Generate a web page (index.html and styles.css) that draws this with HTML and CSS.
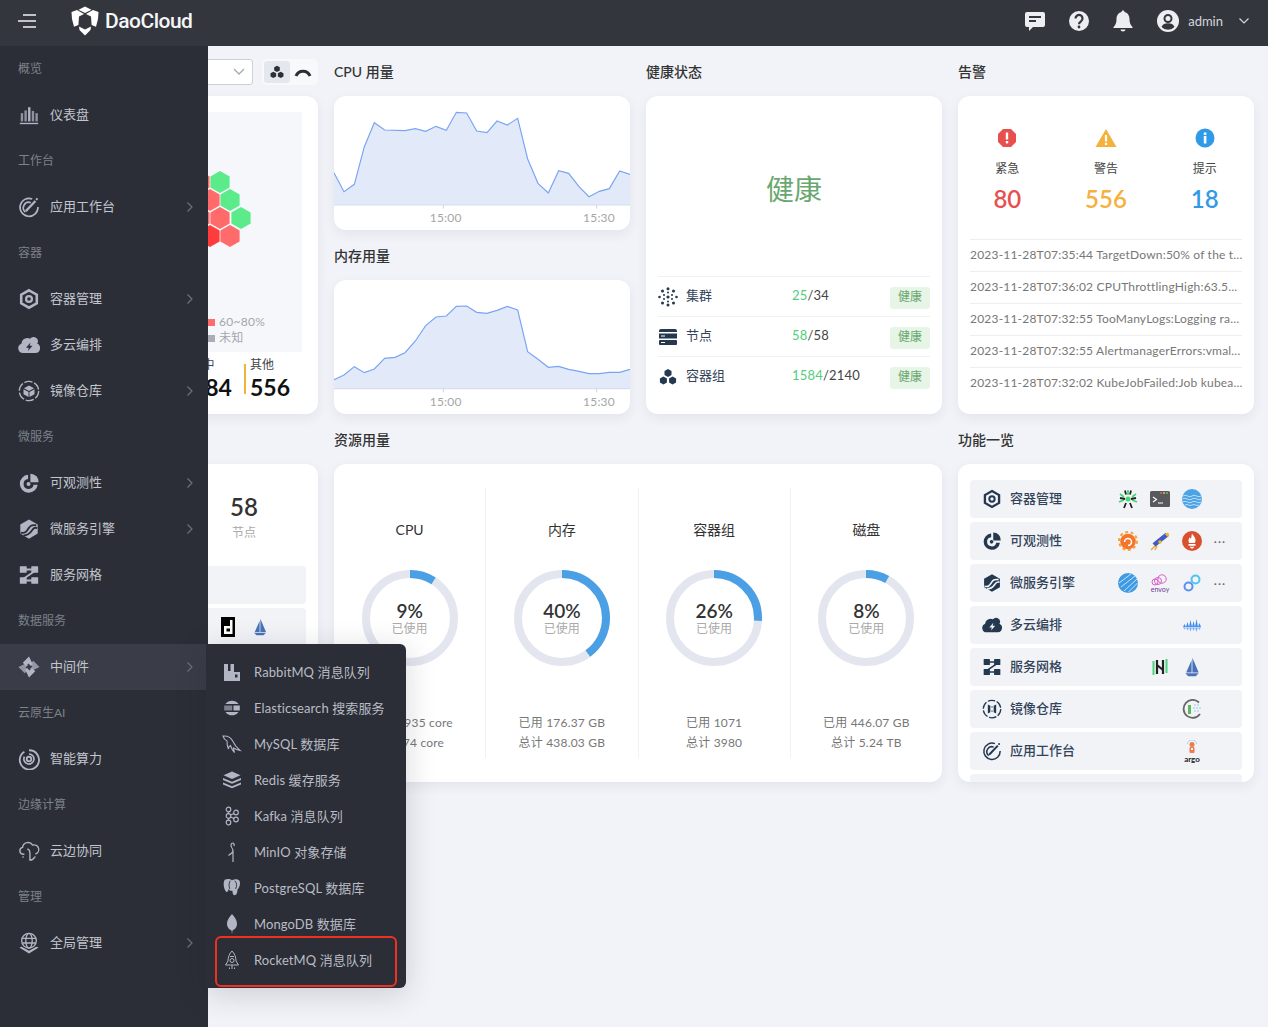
FILE: index.html
```html
<!DOCTYPE html>
<html lang="zh">
<head>
<meta charset="utf-8">
<title>DaoCloud</title>
<link rel="stylesheet" href="styles.css">
</head>
<body>
<svg class="defs" width="0" height="0" aria-hidden="true">
  <defs>
    <mask id="ms-cut"><rect width="24" height="24" fill="#fff"/><path d="M3 16c5 1 6-1 8-4s3-5 9-4M6 19c5 0 7-2 9-5s3-4 6-3" fill="none" stroke="#000" stroke-width="2"/></mask>
    <symbol id="i-bars" viewBox="0 0 24 24"><g fill="currentColor"><rect x="3" y="10" width="2.6" height="9" opacity=".75"/><rect x="7" y="7" width="2.6" height="12" opacity=".75"/><rect x="11" y="3.500" width="2.600" height="15.500"/><rect x="15" y="7.500" width="2.600" height="11.500" opacity=".75"/><rect x="19" y="10" width="2.600" height="9" opacity=".75"/><rect x="2" y="20.500" width="20" height="1.500"/></g></symbol>
    <symbol id="i-work" viewBox="0 0 24 24"><g fill="none" stroke="currentColor" stroke-width="1.800"><path d="M15.500 3.200A9.800 9.800 0 1 0 21.800 12"/><path d="M14 7.300A6 6 0 0 0 8 17.500"/><path d="M8.500 16.500 19 5.500" stroke-width="2.400"/></g><circle cx="20.500" cy="3.500" r="1.200" fill="currentColor"/></symbol>
    <symbol id="i-cont" viewBox="0 0 24 24"><path d="M12 2.500 20.500 7.300v9.400L12 21.500l-8.500-4.800V7.300z" fill="none" stroke="currentColor" stroke-width="2.800"/><circle cx="12" cy="12" r="3.200" fill="none" stroke="currentColor" stroke-width="2.400"/></symbol>
    <symbol id="i-cloud" viewBox="1 3 22 20"><path fill="currentColor" fill-rule="evenodd" d="M6 21a4.800 4.800 0 0 1-1.600-9.300A6.500 6.500 0 0 1 10.500 6a5 5 0 0 1 2.500.7A4.500 4.500 0 0 1 21 9.500a3 3 0 0 1-.8 2A5 5 0 0 1 18.500 21zM13.500 10.500 9 15.800h2.800L11 19l4.500-5.300h-2.800z"/></symbol>
    <symbol id="i-reg" viewBox="0 0 24 24"><circle cx="12" cy="12" r="10.500" fill="none" stroke="currentColor" stroke-width="1.500" stroke-dasharray="9 2"/><path d="M12 6l5.500 3L12 12 6.500 9zM6 10l5.500 3v5.500L6 15.500zM18 10l-5.500 3v5.500L18 15.500z" fill="currentColor"/></symbol>
    <symbol id="i-reg2" viewBox="0 0 24 24"><circle cx="12" cy="12" r="10.500" fill="none" stroke="currentColor" stroke-width="1.500" stroke-dasharray="9 2"/><path d="M7 6.500l3 1.500v8l-3 1.500zM17 6.500 14 8v8l3 1.500z" fill="currentColor"/><path d="M11 9.500h2M11 14.500h2" stroke="currentColor"/></symbol>
    <symbol id="i-obs" viewBox="0 0 24 24"><path fill="currentColor" d="M11 3a9.800 9.800 0 1 0 10.500 11H17a5.500 5.500 0 1 1-6-6.500z"/><path fill="currentColor" d="M13.500 1.800a9 9 0 0 1 9 9.500h-9z"/><circle cx="11.500" cy="13" r="2.200" fill="currentColor"/></symbol>
    <symbol id="i-ms" viewBox="0 0 24 24"><path d="M12 1.500 21.500 7v10L12 22.500 2.500 17V7z" fill="currentColor" mask="url(#ms-cut)"/></symbol>
    <symbol id="i-mesh" viewBox="0 0 24 24"><g fill="currentColor"><rect x="2" y="2.500" width="7.500" height="7" rx=".6"/><rect x="14.500" y="2.500" width="7.500" height="7" rx=".6"/><rect x="2" y="14.500" width="7.500" height="7" rx=".6"/><rect x="14.500" y="14.500" width="7.500" height="7" rx=".6"/></g><path d="M8 6h8M18 8 6 16M8 18h8" fill="none" stroke="currentColor" stroke-width="2"/></symbol>
    <symbol id="i-mid" viewBox="0 0 24 24"><g fill="currentColor"><path d="M12 .5 5.200 7.300 8.800 11 11.500 8.300 14 10.800 16 8.800z"/><path d="M12 .5 5.200 7.300 8.800 11 11.500 8.300 14 10.800 16 8.800z" transform="rotate(90 12 12)" opacity=".75"/><path d="M12 .5 5.200 7.300 8.800 11 11.500 8.300 14 10.800 16 8.800z" transform="rotate(180 12 12)"/><path d="M12 .5 5.200 7.300 8.800 11 11.500 8.300 14 10.800 16 8.800z" transform="rotate(270 12 12)" opacity=".75"/></g></symbol>
    <symbol id="i-ai" viewBox="0 0 24 24"><g fill="none" stroke="currentColor"><circle cx="12" cy="12" r="2.500" stroke-width="2"/><path d="M12 6.500a5.500 5.500 0 1 1-5 3" stroke-width="1.800"/><path d="M7 4a10.500 10.500 0 1 0 5-1.500" stroke-width="2"/></g></symbol>
    <symbol id="i-edge" viewBox="0 0 24 24"><g fill="none" stroke="currentColor" stroke-width="1.500"><path d="M7 15.500H5.500a3.800 3.800 0 0 1-.5-7.500 6 6 0 0 1 11-2.500 5 5 0 0 1 3 9.800"/><path d="M5 19l1-1M19 19l-1-1"/><path d="M10 10c3 0 3 3 3 5s0 5 0 7c2 0 4-1 5-3"/></g></symbol>
    <symbol id="i-global" viewBox="0 0 24 24"><g fill="none" stroke="currentColor" stroke-width="1.400"><circle cx="12" cy="9.500" r="8"/><ellipse cx="12" cy="9.500" rx="3.500" ry="8"/><path d="M4.500 7h15M4.500 12h15"/></g><path fill="currentColor" d="M1.500 17 12 23.500 22.500 17l-2.500-1-8 4.500L4 16z"/></symbol>
    <symbol id="i-hex" viewBox="-10 -11 20 22"><path d="M0-11 9.600-5.500V5.500L0 11-9.600 5.500V-5.500z" fill="currentColor"/></symbol>
    <symbol id="i-tri" viewBox="0 0 24 24"><g fill="currentColor"><path d="M12 2.500l4.200 2.400v4.800L12 12.100 7.800 9.700V4.900z"/><path d="M6.500 11.500l4.200 2.400v4.800l-4.200 2.400-4.200-2.400v-4.800z"/><path d="M17.500 11.500l4.200 2.400v4.800l-4.200 2.400-4.200-2.400v-4.800z"/></g></symbol>
    <symbol id="i-sail" viewBox="0 0 24 24"><path fill="#4a72b8" d="M12.500 1 20 18.500h-7.500zM11.500 4v14.500H5z"/><path fill="#4a72b8" d="M4 19.500h16L16.500 23h-9z"/></symbol>
  </defs>
</svg>

<header class="topbar">
  <svg class="burger" width="20" height="16" viewBox="0 0 20 16"><path d="M6 2h13M1 8h18M6 14h13" stroke="#f1f2f4" stroke-width="1.600" fill="none"/></svg>
  <svg class="logo" width="28" height="30" viewBox="0 0 28 30"><path fill="#fff" d="M14 .5l6.500 3.200L14 7 7.500 3.700zM.5 6 6 3.900l7 4-5 2.600-.6 8.500L3 20.800 1 13zM27.500 6 22 3.900l-7 4 5 2.600.6 8.500 4.400 1.800 2-7.800zM8 20.500l6 3 6-3-.5 3.500-5.500 5.500L8.500 24z"/></svg>
  <span class="brand">DaoCloud</span>
  <div class="top-actions">
    <svg width="24" height="24" viewBox="0 0 24 24"><path fill="#eceef2" d="M4 3h16a2 2 0 0 1 2 2v11a2 2 0 0 1-2 2H10l-4 4v-4H4a2 2 0 0 1-2-2V5a2 2 0 0 1 2-2z"/><path d="M6 8h12M6 12h7" stroke="#33363d" stroke-width="2"/></svg>
    <svg width="24" height="24" viewBox="0 0 24 24"><circle cx="12" cy="12" r="10" fill="#eceef2"/><path d="M8.500 9.500a3.500 3.500 0 1 1 5.500 2.800c-1.300.9-2 1.500-2 3" fill="none" stroke="#33363d" stroke-width="2.200"/><circle cx="12" cy="18" r="1.400" fill="#33363d"/></svg>
    <svg width="24" height="24" viewBox="0 0 24 24"><path fill="#eceef2" d="M12 1.500c1 0 1.500.7 1.500 1.500C17 4 18.500 7 18.500 10c0 4 1 6 3 8v1h-19v-1c2-2 3-4 3-8 0-3 1.500-6 5-7 0-.8.5-1.500 1.500-1.500zM9.500 20.500h5a2.500 2 0 0 1-5 0z"/></svg>
    <div class="user">
      <svg width="22" height="22" viewBox="0 0 22 22"><circle cx="11" cy="11" r="11" fill="#eceef2"/><circle cx="11" cy="8.500" r="3.500" fill="none" stroke="#33363d" stroke-width="2"/><path d="M4.500 17c1-3 3.500-3.800 6.500-3.800s5.500.8 6.500 3.800a9 9 0 0 1-13 0z" fill="#33363d"/></svg>
      <span class="user-name">admin</span>
      <svg class="user-caret" width="12" height="8" viewBox="0 0 12 8"><path d="M1.500 1.500 6 6l4.500-4.500" fill="none" stroke="#d5d7dc" stroke-width="1.200"/></svg>
    </div>
  </div>
</header>

<main class="board">
  <section class="cell overview">
    <div class="toolbar">
      <div class="select"><svg width="12" height="8" viewBox="0 0 12 8"><path d="M1 1l5 5 5-5" fill="none" stroke="#a5a9b2" stroke-width="1.300"/></svg></div>
      <div class="toggle">
        <span class="toggle-btn active"><svg width="16" height="16"><use href="#i-tri" color="#2d2f36"/></svg></span>
        <span class="toggle-btn"><svg width="18" height="12" viewBox="0 0 18 12"><path d="M2 10a7.500 7.500 0 0 1 14 0" fill="none" stroke="#2d2f36" stroke-width="3"/></svg></span>
      </div>
    </div>
    <div class="card overview-card">
      <div class="hex-box">
        <svg class="hex-map" width="264" height="190" viewBox="0 0 264 190">
          <g color="#5ceb8b"><use href="#i-hex" x="172" y="59" width="20" height="22"/><use href="#i-hex" x="182" y="77" width="20" height="22"/><use href="#i-hex" x="193" y="95" width="20" height="22"/></g>
          <g color="#ff6b6b"><use href="#i-hex" x="152" y="59" width="20" height="22"/><use href="#i-hex" x="162" y="77" width="20" height="22"/><use href="#i-hex" x="172" y="95" width="20" height="22"/><use href="#i-hex" x="152" y="95" width="20" height="22"/><use href="#i-hex" x="182" y="113" width="20" height="22"/></g>
          <g color="#ff3b3b"><use href="#i-hex" x="162" y="113" width="20" height="22"/></g>
        </svg>
        <div class="legend">
          <span class="legend-item"></span>
          <span class="legend-item"><i class="swatch sw-salmon"></i>60~80%</span>
          <span class="legend-item"></span>
          <span class="legend-item"><i class="swatch sw-grey"></i>未知</span>
        </div>
      </div>
      <div class="stats">
        <div class="stat stat-run"><span class="stat-label">运行中</span><b class="stat-num">1584</b></div>
        <i class="stat-bar"></i>
        <div class="stat"><span class="stat-label">其他</span><b class="stat-num">556</b></div>
      </div>
    </div>
  </section>

  <section class="cell">
    <h2 class="title">CPU 用量</h2>
    <div class="card chart">
      <svg width="296" height="134" viewBox="42 138 888 402">
        <path class="area" d="M42 368 72 425 103 403 133 290 163 218 194 240 255 242 286 236 317 244 348 229 379 241 409 187 440 189 470 243 501 248 531 213 562 225 593 205 623 327 654 400 685 429 716 362 746 370 777 410 807 440 838 424 868 416 899 363 930 373V465H42z"/>
        <path class="line" d="M42 368 72 425 103 403 133 290 163 218 194 240 255 242 286 236 317 244 348 229 379 241 409 187 440 189 470 243 501 248 531 213 562 225 593 205 623 327 654 400 685 429 716 362 746 370 777 410 807 440 838 424 868 416 899 363 930 373"/>
        <path class="axis" d="M42 465H930"/><path class="tick" d="M370 465v11M830 465v11"/>
        <text class="tick-label" x="377" y="516" text-anchor="middle">15:00</text>
        <text class="tick-label" x="837" y="516" text-anchor="middle">15:30</text>
      </svg>
    </div>
    <h2 class="title">内存用量</h2>
    <div class="card chart">
      <svg width="296" height="134" viewBox="42 690 888 402">
        <path class="area" d="M42 989 72 975 103 950 133 968 163 957 194 925 225 922 255 908 286 873 317 827 348 801 379 798 409 769 440 768 470 787 501 790 531 781 562 769 593 780 623 905 654 928 685 952 716 949 746 958 777 964 807 971 838 971 868 967 899 967 930 958V1016H42z"/>
        <path class="line" d="M42 989 72 975 103 950 133 968 163 957 194 925 225 922 255 908 286 873 317 827 348 801 379 798 409 769 440 768 470 787 501 790 531 781 562 769 593 780 623 905 654 928 685 952 716 949 746 958 777 964 807 971 838 971 868 967 899 967 930 958"/>
        <path class="axis" d="M42 1016H930"/><path class="tick" d="M370 1016v11M830 1016v11"/>
        <text class="tick-label" x="377" y="1068" text-anchor="middle">15:00</text>
        <text class="tick-label" x="837" y="1068" text-anchor="middle">15:30</text>
      </svg>
    </div>
  </section>

  <section class="cell">
    <h2 class="title">健康状态</h2>
    <div class="card health">
      <div class="health-big">健康</div>
      <div class="health-row">
        <svg class="health-ico" width="20" height="20" viewBox="0 0 20 20"><g fill="#24384f"><circle cx="10" cy="1.800" r="1.500"/><circle cx="4.500" cy="4" r="1.500"/><circle cx="15.500" cy="4" r="1.500"/><circle cx="1.500" cy="10" r="1.300"/><circle cx="18.500" cy="10" r="1.300"/><circle cx="4.500" cy="16" r="1.500"/><circle cx="15.500" cy="16" r="1.500"/><circle cx="10" cy="18" r="1.500"/><circle cx="10" cy="10" r="1.600"/><circle cx="10" cy="5.500" r="1"/><circle cx="10" cy="14.500" r="1"/><circle cx="6" cy="8" r="1"/><circle cx="14" cy="8" r="1"/><circle cx="6" cy="12" r="1"/><circle cx="14" cy="12" r="1"/></g></svg>
        <span class="health-name">集群</span>
        <span class="health-val"><em>25</em>/34</span>
        <span class="tag">健康</span>
      </div>
      <div class="health-row">
        <svg class="health-ico" width="20" height="20" viewBox="0 0 20 20"><g fill="#24384f"><path d="M3 2h14a2 2 0 0 1 2 2v1H1V4a2 2 0 0 1 2-2z"/><rect x="1" y="6.500" width="18" height="5"/><rect x="1" y="13" width="18" height="5" rx="1"/></g><path d="M3 9h4M3 15.500h4" stroke="#fff"/></svg>
        <span class="health-name">节点</span>
        <span class="health-val"><em>58</em>/58</span>
        <span class="tag">健康</span>
      </div>
      <div class="health-row">
        <svg class="health-ico" width="20" height="20" color="#24384f"><use href="#i-tri"/></svg>
        <span class="health-name">容器组</span>
        <span class="health-val"><em>1584</em>/2140</span>
        <span class="tag">健康</span>
      </div>
    </div>
  </section>

  <section class="cell">
    <h2 class="title">告警</h2>
    <div class="card alerts">
      <div class="alert-sum">
        <div class="alert-col">
          <svg width="20" height="20" viewBox="0 0 20 20"><path fill="#e84f4f" d="M6 1h8l5 5v8l-5 5H6l-5-5V6z"/><rect x="8.800" y="4.500" width="2.400" height="7" fill="#fff"/><rect x="8.800" y="13" width="2.400" height="2.400" fill="#fff"/></svg>
          <span class="alert-label">紧急</span><b class="alert-num red">80</b>
        </div>
        <div class="alert-col">
          <svg width="22" height="20" viewBox="0 0 22 20"><path fill="#f5b13d" d="M11 1l10.500 18H.5z"/><rect x="9.900" y="7" width="2.200" height="6.500" fill="#fff"/><rect x="9.900" y="14.800" width="2.200" height="2.200" fill="#fff"/></svg>
          <span class="alert-label">警告</span><b class="alert-num orange">556</b>
        </div>
        <div class="alert-col">
          <svg width="20" height="20" viewBox="0 0 20 20"><circle cx="10" cy="10" r="9.500" fill="#2f9ae8"/><rect x="8.800" y="8" width="2.600" height="7.500" fill="#fff"/><rect x="8.800" y="4.500" width="2.600" height="2.400" fill="#fff"/></svg>
          <span class="alert-label">提示</span><b class="alert-num blue">18</b>
        </div>
      </div>
      <ul class="alert-list">
        <li>2023-11-28T07:35:44 TargetDown:50% of the t...</li>
        <li>2023-11-28T07:36:02 CPUThrottlingHigh:63.5...</li>
        <li>2023-11-28T07:32:55 TooManyLogs:Logging ra...</li>
        <li>2023-11-28T07:32:55 AlertmanagerErrors:vmal...</li>
        <li>2023-11-28T07:32:02 KubeJobFailed:Job kubea...</li>
      </ul>
    </div>
  </section>

  <section class="cell">
    <div class="title"></div>
    <div class="card infra">
      <div class="infra-nums">
        <div class="infra-num"></div>
        <div class="infra-num"><b>58</b><span>节点</span></div>
      </div>
      <div class="infra-row"></div>
      <div class="infra-row infra-logos">
        <svg width="14" height="20" viewBox="0 0 14 20"><rect width="14" height="20"/><path fill="#fff" fill-rule="evenodd" d="M9 3h2.500v14H3V9h6zM5.500 11.500v3h3.500v-3z"/></svg>
        <svg width="18" height="20" viewBox="0 0 24 24"><use href="#i-sail"/></svg>
      </div>
      <div class="infra-row"></div>
    </div>
  </section>

  <section class="cell wide">
    <h2 class="title">资源用量</h2>
    <div class="card usage">
      <div class="usage-col">
        <h3 class="usage-title">CPU</h3>
        <div class="ring"><svg width="96" height="96" viewBox="0 0 96 96"><circle class="ring-bg" cx="48" cy="48" r="44"/><circle class="ring-fg" cx="48" cy="48" r="44" pathLength="100" stroke-dasharray="9 91"/></svg><div class="ring-text"><b>9%</b><span>已使用</span></div></div>
        <p class="usage-line">已用 1.935 core</p><p class="usage-line">总计 74 core</p>
      </div>
      <div class="usage-col">
        <h3 class="usage-title">内存</h3>
        <div class="ring"><svg width="96" height="96" viewBox="0 0 96 96"><circle class="ring-bg" cx="48" cy="48" r="44"/><circle class="ring-fg" cx="48" cy="48" r="44" pathLength="100" stroke-dasharray="40 60"/></svg><div class="ring-text"><b>40%</b><span>已使用</span></div></div>
        <p class="usage-line">已用 176.37 GB</p><p class="usage-line">总计 438.03 GB</p>
      </div>
      <div class="usage-col">
        <h3 class="usage-title">容器组</h3>
        <div class="ring"><svg width="96" height="96" viewBox="0 0 96 96"><circle class="ring-bg" cx="48" cy="48" r="44"/><circle class="ring-fg" cx="48" cy="48" r="44" pathLength="100" stroke-dasharray="26 74"/></svg><div class="ring-text"><b>26%</b><span>已使用</span></div></div>
        <p class="usage-line">已用 1071</p><p class="usage-line">总计 3980</p>
      </div>
      <div class="usage-col">
        <h3 class="usage-title">磁盘</h3>
        <div class="ring"><svg width="96" height="96" viewBox="0 0 96 96"><circle class="ring-bg" cx="48" cy="48" r="44"/><circle class="ring-fg" cx="48" cy="48" r="44" pathLength="100" stroke-dasharray="8 92"/></svg><div class="ring-text"><b>8%</b><span>已使用</span></div></div>
        <p class="usage-line">已用 446.07 GB</p><p class="usage-line">总计 5.24 TB</p>
      </div>
    </div>
  </section>

  <section class="cell">
    <h2 class="title">功能一览</h2>
    <div class="card features">
      <div class="feat">
        <svg class="feat-ico"><use href="#i-cont"/></svg><span class="feat-name">容器管理</span>
        <span class="slot"><svg width="20" height="20" viewBox="0 0 20 20"><g fill="none" stroke-width="1.800"><path d="M10 1v5M2 5l4 3M18 5l-4 3M1 13l5-2M19 13l-5-2" stroke="#44d873"/><path d="M7 1.500l1 4M13 1.500l-1 4M2 9l5 1M18 9l-5 1M6 19l2-5M14 19l-2-5" stroke="#222"/></g><circle cx="10" cy="10" r="2.500" fill="#44d873"/></svg></span>
        <span class="slot"><svg width="20" height="16" viewBox="0 0 20 16"><rect width="20" height="16" rx="1.500" fill="#58595d"/><circle cx="11" cy="2" r=".9" fill="#e66"/><circle cx="14" cy="2" r=".9" fill="#ec5"/><circle cx="17" cy="2" r=".9" fill="#6c6"/><path d="M3 6l3.500 2.500L3 11M8 12h5" stroke="#fff" fill="none" stroke-width="1.100"/></svg></span>
        <span class="slot"><svg width="20" height="20" viewBox="0 0 20 20"><circle cx="10" cy="10" r="10" fill="#4ba3e6"/><path d="M1 7q2-1.500 4.500 0t4.500 0 4.500 0 4.500 0M.500 10q2-1.500 4.750 0t4.750 0 4.750 0 4.750 0M1 13q2-1.500 4.500 0t4.500 0 4.500 0 4.500 0M3 16q2-1 3.500 0t3.500 0 3.500 0 3.500 0" fill="none" stroke="#cfe6f8" stroke-width=".9"/></svg></span>
        <span class="dots"></span>
      </div>
      <div class="feat">
        <svg class="feat-ico"><use href="#i-obs"/></svg><span class="feat-name">可观测性</span>
        <span class="slot"><svg width="20" height="20" viewBox="0 0 20 20"><circle cx="10" cy="10" r="9" fill="none" stroke="#f9a23c" stroke-width="2" stroke-dasharray="3 2.600"/><circle cx="10" cy="10.500" r="7.800" fill="#f3762b"/><path d="M6.500 11a3.500 3.500 0 1 1 3.500 3.500" fill="none" stroke="#fff" stroke-width="1.500"/></svg></span>
        <span class="slot"><svg width="20" height="20" viewBox="0 0 20 20"><path d="M4 14 17 3.500" stroke="#3f5cc4" stroke-width="4.500"/><path d="M14.500 3 18 1.500 19.500 4 18 6z" fill="#f0b33a"/><circle cx="10" cy="11" r="1.800" fill="#f0b33a"/><path d="M1 19l4-4M5 19l2-4" stroke="#f0a93a" stroke-width="1.600"/></svg></span>
        <span class="slot"><svg width="20" height="20" viewBox="0 0 20 20"><circle cx="10" cy="10" r="10" fill="#d9502f"/><path d="M10 2.500c1 2 3.500 3.500 3.500 7 0 1-.3 2-.8 2.500H7.300c-.5-.5-.8-1.500-.8-2.500 0-1.500 1-2.500 1.500-3.500.2 1 .5 1.500 1 1.800C9.500 6 9.500 4 10 2.500zM6.500 13h7v1.800h-7zM8 15.800h4c0 1-1 1.800-2 1.800s-2-.8-2-1.800z" fill="#fff"/></svg></span>
        <span class="dots">···</span>
      </div>
      <div class="feat">
        <svg class="feat-ico"><use href="#i-ms"/></svg><span class="feat-name">微服务引擎</span>
        <span class="slot"><svg width="20" height="20" viewBox="0 0 20 20"><circle cx="10" cy="10" r="10" fill="#3e9ae3"/><path d="M17 3 3 14M19 6 6 18M13 1 1 10M19.500 10 10 19.500" stroke="#d6ebfb" stroke-width=".9" fill="none"/></svg></span>
        <span class="slot logo-text"><svg width="18" height="12" viewBox="0 0 18 12"><g fill="none" stroke="#d95fc8" stroke-width="1"><circle cx="11" cy="5" r="4.200"/><circle cx="7" cy="7" r="3.500"/><circle cx="4" cy="8" r="3"/></g></svg><span class="envoy">envoy</span></span>
        <span class="slot"><svg width="18" height="18" viewBox="0 0 18 18"><g fill="none" stroke-width="2"><circle cx="5.500" cy="12.500" r="4" stroke="#5a8ff0"/><circle cx="12.500" cy="5.500" r="4" stroke="#4cc4ee"/></g></svg></span>
        <span class="dots">···</span>
      </div>
      <div class="feat">
        <svg class="feat-ico"><use href="#i-cloud"/></svg><span class="feat-name">多云编排</span>
        <span class="slot"></span><span class="slot"></span>
        <span class="slot"><svg width="20" height="16" viewBox="0 0 20 14"><path fill="#3f8df0" d="M1 9 2.500 6 4 9 5.500 4 7 9 8.500 2 10 9 11.500 3 13 9 14.500 1 16 9 17.500 5 19 9z"/><path fill="#3f8df0" opacity=".65" d="M1 9.500 2.500 11.500 4 9.500 5.500 12.500 7 9.500 8.500 13.500 10 9.500 11.500 13 13 9.500 14.500 14 16 9.500 17.500 12 19 9.500z"/></svg></span>
        <span class="dots"></span>
      </div>
      <div class="feat">
        <svg class="feat-ico"><use href="#i-mesh"/></svg><span class="feat-name">服务网格</span>
        <span class="slot"></span>
        <span class="slot"><svg width="16" height="18" viewBox="0 0 16 18"><path d="M1.500 3v14M14.500 1v14" stroke="#46d97a" stroke-width="2" fill="none"/><path d="M5 2v14M11 2v14M5 7l6 5" stroke="#222" stroke-width="2.200" fill="none"/></svg></span>
        <span class="slot"><svg width="20" height="20" viewBox="0 0 24 24"><use href="#i-sail"/></svg></span>
        <span class="dots"></span>
      </div>
      <div class="feat">
        <svg class="feat-ico"><use href="#i-reg2"/></svg><span class="feat-name">镜像仓库</span>
        <span class="slot"></span><span class="slot"></span>
        <span class="slot"><svg width="20" height="20" viewBox="0 0 20 20"><path d="M17 3.500A9 9 0 1 0 18 15" fill="none" stroke="#66686c" stroke-width="1.800"/><rect x="6" y="6" width="3" height="9" fill="#5fb95a"/><path d="M12 6h6M11 9h8M12 12h5" stroke="#9cc9e8" stroke-width="1.200" stroke-dasharray="2 1"/></svg></span>
        <span class="dots"></span>
      </div>
      <div class="feat">
        <svg class="feat-ico"><use href="#i-work"/></svg><span class="feat-name">应用工作台</span>
        <span class="slot"></span><span class="slot"></span>
        <span class="slot logo-text"><svg width="12" height="15" viewBox="0 0 12 15"><path d="M1.500 4a4.500 4 0 0 1 9 0" fill="none" stroke="#a8d8ee" stroke-width="1"/><circle cx="6" cy="4.500" r="2.500" fill="#ef7b4d"/><rect x="3.500" y="7" width="5" height="6" rx="1" fill="#ef7b4d"/><rect x="5" y="8" width="2" height="2" fill="#fff"/></svg><span class="argo">argo</span></span>
        <span class="dots"></span>
      </div>
      <div class="feat"></div>
    </div>
  </section>
</main>

<nav class="sidebar">
  <div class="nav-group">概览</div>
  <div class="nav-item"><svg class="nav-ico"><use href="#i-bars"/></svg><span class="nav-text">仪表盘</span></div>
  <div class="nav-group">工作台</div>
  <div class="nav-item"><svg class="nav-ico"><use href="#i-work"/></svg><span class="nav-text">应用工作台</span><svg class="chev" viewBox="0 0 8 12"><path d="M1.500 1.500 6 6l-4.500 4.500"/></svg></div>
  <div class="nav-group">容器</div>
  <div class="nav-item"><svg class="nav-ico"><use href="#i-cont"/></svg><span class="nav-text">容器管理</span><svg class="chev" viewBox="0 0 8 12"><path d="M1.500 1.500 6 6l-4.500 4.500"/></svg></div>
  <div class="nav-item"><svg class="nav-ico"><use href="#i-cloud"/></svg><span class="nav-text">多云编排</span></div>
  <div class="nav-item"><svg class="nav-ico"><use href="#i-reg"/></svg><span class="nav-text">镜像仓库</span><svg class="chev" viewBox="0 0 8 12"><path d="M1.500 1.500 6 6l-4.500 4.500"/></svg></div>
  <div class="nav-group">微服务</div>
  <div class="nav-item"><svg class="nav-ico"><use href="#i-obs"/></svg><span class="nav-text">可观测性</span><svg class="chev" viewBox="0 0 8 12"><path d="M1.500 1.500 6 6l-4.500 4.500"/></svg></div>
  <div class="nav-item"><svg class="nav-ico"><use href="#i-ms"/></svg><span class="nav-text">微服务引擎</span><svg class="chev" viewBox="0 0 8 12"><path d="M1.500 1.500 6 6l-4.500 4.500"/></svg></div>
  <div class="nav-item"><svg class="nav-ico"><use href="#i-mesh"/></svg><span class="nav-text">服务网格</span></div>
  <div class="nav-group">数据服务</div>
  <div class="nav-item active"><svg class="nav-ico"><use href="#i-mid"/></svg><span class="nav-text">中间件</span><svg class="chev" viewBox="0 0 8 12"><path d="M1.500 1.500 6 6l-4.500 4.500"/></svg></div>
  <div class="nav-group">云原生AI</div>
  <div class="nav-item"><svg class="nav-ico"><use href="#i-ai"/></svg><span class="nav-text">智能算力</span></div>
  <div class="nav-group">边缘计算</div>
  <div class="nav-item"><svg class="nav-ico"><use href="#i-edge"/></svg><span class="nav-text">云边协同</span></div>
  <div class="nav-group">管理</div>
  <div class="nav-item"><svg class="nav-ico"><use href="#i-global"/></svg><span class="nav-text">全局管理</span><svg class="chev" viewBox="0 0 8 12"><path d="M1.500 1.500 6 6l-4.500 4.500"/></svg></div>
</nav>

<div class="flyout">
  <div class="fly-item"><svg class="fly-ico" viewBox="0 0 20 20"><path fill="currentColor" fill-rule="evenodd" d="M2 2h4v7h2.500V2H12v8h6v9H2zM13 12.500v3h2.500v-3z"/></svg><span class="fly-text">RabbitMQ 消息队列</span></div>
  <div class="fly-item"><svg class="fly-ico" viewBox="0 0 20 20"><g fill="currentColor"><path d="M3.500 6a8 8 0 0 1 13 0z"/><path d="M2.200 7.500h8v5h-8z" opacity=".6"/><path d="M11.500 7.500h6.300v5h-6.300z"/><path d="M3.500 14h13a8 8 0 0 1-13 0z"/></g></svg><span class="fly-text">Elasticsearch 搜索服务</span></div>
  <div class="fly-item"><svg class="fly-ico" viewBox="0 0 20 20"><path d="M1 2c5-.5 8 1.500 10 5.500 1.500 3.500 3.500 6 7 9-3-.5-5-1.500-6.500-2.500 0 1.500.5 3 1 4.500-2-2-3-4-4-7-1.500 1-2 2.500-2 3.500C5 12 5 9 5 7 3 6 1.500 4 1 2z" fill="none" stroke="currentColor" stroke-width="1.100"/></svg><span class="fly-text">MySQL 数据库</span></div>
  <div class="fly-item"><svg class="fly-ico" viewBox="0 0 20 20"><path fill="currentColor" d="M10 1.500l8.500 3.800L10 9 1.500 5.300zM1 8l9 3.800L19 8v2l-9 3.800L1 10zM1 12.500l9 3.800 9-3.800v2L10 18.300 1 14.500z"/></svg><span class="fly-text">Redis 缓存服务</span></div>
  <div class="fly-item"><svg class="fly-ico" viewBox="0 0 20 20"><g fill="none" stroke="currentColor" stroke-width="1.200"><circle cx="6.500" cy="3.500" r="2.300"/><circle cx="6.500" cy="10" r="2.300"/><circle cx="6.500" cy="16.500" r="2.300"/><circle cx="14" cy="6.500" r="2.300"/><circle cx="14" cy="13.500" r="2.300"/><path d="M8.500 9l3.500-1.500M8.500 11l3.500 1.500M6.500 5.800v2M6.500 12.300v2"/></g></svg><span class="fly-text">Kafka 消息队列</span></div>
  <div class="fly-item"><svg class="fly-ico" viewBox="0 0 20 20"><path d="M11 1c-2.500 0-2.500 3-1 5 2 2.500 1 5-3.500 7.500L11 10v10M11 1c1 .5 1.500 1.500 1 3" fill="none" stroke="currentColor" stroke-width="1.200"/></svg><span class="fly-text">MinIO 对象存储</span></div>
  <div class="fly-item"><svg class="fly-ico" viewBox="0 0 22 22"><path fill="currentColor" d="M3 2c4-1.500 6-.5 8 .5 3-1.500 7-1.500 8.500 1 1 3.500-.5 7-2.500 9.500 0 3-1 6-3 6-2 0-2.500-2.500-2.500-5-2 .5-3.500-.5-4-2-1 2.500-2 4.500-3 3C2.500 13 .500 6 3 2z"/><path d="M9 3c-1.500 3-1.500 6-.5 9M14 3c2.500 2 2.500 6 1 9" fill="none" stroke="#2b2e37" stroke-width="1"/></svg><span class="fly-text">PostgreSQL 数据库</span></div>
  <div class="fly-item"><svg class="fly-ico" viewBox="0 0 20 20"><path fill="currentColor" d="M10 0c3.500 4 5 6.500 5 10 0 3.500-2.500 5.500-4.500 6.500L10 20l-.5-3.500C7.500 15.500 5 13.500 5 10c0-3.500 1.500-6 5-10z"/></svg><span class="fly-text">MongoDB 数据库</span></div>
  <div class="fly-item"><svg class="fly-ico" viewBox="0 0 20 20"><g fill="none" stroke="currentColor" stroke-width="1"><path d="M10 1c2.500 2.500 4 6 4 10l2.500 4h-13L6 11c0-4 1.500-7.500 4-10z"/><path d="M8 6.500h4M10 15v4M7.500 17.500v1.500M12.500 17.500v1.500"/><circle cx="10" cy="10.500" r="2"/></g></svg><span class="fly-text">RocketMQ 消息队列</span></div>
</div>
<div class="callout"></div>
</body>
</html>
```

FILE: styles.css
```css
* { box-sizing: border-box; }
html, body { margin: 0; padding: 0; }
body {
  position: relative;
  width: 1268px;
  height: 1027px;
  overflow: hidden;
  background: #f1f3f8;
  color: #333;
  font-family: Lato, "Noto Sans CJK SC", sans-serif;
  font-size: 12px;
}
.defs { position: absolute; }
h2, h3, p, ul { margin: 0; padding: 0; list-style: none; }

.topbar {
  display: flex;
  align-items: center;
  height: 46px;
  padding: 0 18px 4px 17px;
  background: #33363d;
  color: #eceef2;
}
.burger { margin-right: 34px; }
.logo { margin-right: 6px; }
.brand { font: 500 21px Roboto, sans-serif; color: #f4f5f7; letter-spacing: -.5px; }
.top-actions { display: flex; align-items: center; gap: 20px; margin-left: auto; }
.user { display: flex; align-items: center; margin-left: 2px; }
.user-name { margin-left: 9px; font-size: 13px; color: #d5d7dc; }
.user-caret { margin-left: 15px; }

.board {
  display: grid;
  grid-template-columns: repeat(4, 296px);
  grid-template-rows: 368px 368px;
  column-gap: 16px;
  padding-left: 22px;
}
.cell { display: flex; flex-direction: column; }
.wide { grid-column: span 2; }
.title {
  display: flex;
  align-items: center;
  flex: none;
  height: 50px;
  font-size: 14px;
  font-weight: 500;
  color: #333;
}
.card {
  background: #fff;
  border-radius: 12px;
  box-shadow: 0 4px 12px rgba(60, 70, 100, .08);
  overflow: hidden;
}

.toolbar { display: flex; align-items: center; justify-content: flex-end; height: 50px; padding-top: 2px; }
.select {
  display: flex;
  align-items: center;
  justify-content: flex-end;
  width: 150px;
  height: 26px;
  margin-right: 9px;
  padding-right: 7px;
  background: #fff;
  border: 1px solid #ccd0d8;
  border-radius: 3px;
}
.toggle { display: flex; align-items: center; width: 56px; height: 26px; padding: 2px; background: #f8f9fb; border-radius: 5px; }
.toggle-btn { display: flex; align-items: center; justify-content: center; width: 26px; height: 22px; border-radius: 3px; }
.toggle-btn.active { background: #e4e7ee; }
.toggle-btn:last-child { width: 26px; }

.overview-card { flex: 1; padding: 16px 0 0; }
.hex-box { display: flex; flex-direction: column; justify-content: space-between; height: 240px; margin: 0 16px; padding-bottom: 6px; background: #f6f7fa; }
.hex-map { display: block; }
.legend { display: grid; grid-template-columns: 170px 1fr; grid-auto-rows: 16px; line-height: 16px; color: #a3a6ad; letter-spacing: .3px; }
.legend-item { display: flex; align-items: center; gap: 4px; }
.swatch { width: 7px; height: 7px; }
.sw-salmon { background: #ff6b6b; }
.sw-grey { background: #a9adb5; }
.stats { display: flex; justify-content: flex-end; align-items: center; padding: 5px 28px 13px 0; }
.stat { display: flex; flex-direction: column; }
.stat-run { margin-right: 12px; }
.stat-label { line-height: 16px; color: #444; }
.stat-num { margin-top: 1px; font-size: 23px; line-height: 26px; font-weight: 700; color: #111; }
.stat-bar { width: 2px; height: 30px; margin-right: 4px; background: #f2b33d; }

.chart { height: 134px; }
.chart svg { display: block; }
.area { fill: #e2eafa; }
.line { fill: none; stroke: #7aa4f3; stroke-width: 3.500; }
.axis { fill: none; stroke: #d4def3; stroke-width: 3.500; }
.tick { fill: none; stroke: #ccc; stroke-width: 2.500; }
.tick-label { font-size: 36px; fill: #a6a6a6; letter-spacing: .6px; }

.health { flex: 1; }
.health-big { display: flex; align-items: center; justify-content: center; height: 180px; padding-top: 4px; font-size: 28px; color: #6aa76f; }
.health-row { display: flex; align-items: center; height: 40px; margin: 0 12px; border-top: 1px solid #f0f1f4; }
.health-ico { width: 20px; height: 20px; margin-right: 8px; }
.health-name { width: 106px; padding-bottom: 4px; font-size: 13px; color: #33445a; }
.health-val { flex: 1; padding-bottom: 4px; font-size: 13px; color: #444; letter-spacing: .2px; }
.health-val em { font-style: normal; color: #4fce7c; }
.tag { width: 40px; height: 22px; margin-top: 2px; line-height: 20px; text-align: center; background: #e6f5e6; border-radius: 3px; color: #6aa76f; }

.alerts { flex: 1; }
.alert-sum { display: grid; grid-template-columns: repeat(3, 1fr); height: 143px; padding-top: 32px; }
.alert-col { display: flex; flex-direction: column; align-items: center; }
.alert-label { margin-top: 13px; line-height: 16px; color: #444; }
.alert-num { margin-top: 7px; font-size: 24px; line-height: 30px; font-weight: 600; }
.red { color: #e84f4f; }
.orange { color: #f5b13d; }
.blue { color: #2f9ae8; }
.alert-list { margin: 0 12px; }
.alert-list li { height: 32px; line-height: 29px; border-top: 1px solid #eceef2; color: #777; letter-spacing: .2px; white-space: nowrap; overflow: hidden; }

.infra { flex: 1; padding-top: 28px; }
.infra-nums { display: grid; grid-template-columns: 1fr 148px; height: 74px; }
.infra-num { display: flex; flex-direction: column; align-items: center; }
.infra-num b { font-size: 24px; line-height: 30px; font-weight: 600; color: #333; }
.infra-num span { margin-top: 3px; line-height: 16px; color: #aaa; }
.infra-row { display: flex; align-items: center; justify-content: flex-end; gap: 16px; height: 38px; margin: 0 12px 4px; padding-right: 37px; background: #f1f3f7; border-radius: 4px; }

.usage { display: flex; flex: 1; padding: 24px 0; }
.usage-col { display: flex; flex-direction: column; align-items: center; flex: 1; padding-top: 32px; border-left: 1px solid #f0f1f4; }
.usage-col:first-child { border-left: 0; }
.usage-title { font-size: 14px; font-weight: 400; line-height: 20px; color: #333; }
.ring { position: relative; width: 96px; height: 96px; margin: 30px 0 47px; }
.ring svg { display: block; }
.ring-bg { fill: none; stroke: #e3e6ee; stroke-width: 8; }
.ring-fg { fill: none; stroke: #4b9fe5; stroke-width: 8; transform: rotate(-90deg); transform-origin: 48px 48px; }
.ring-text { position: absolute; inset: 0; display: flex; flex-direction: column; align-items: center; justify-content: center; }
.ring-text b { font-size: 19px; line-height: 20px; font-weight: 600; color: #333; }
.ring-text span { line-height: 15px; color: #aaa; }
.usage-line { line-height: 20px; color: #777; letter-spacing: .2px; }

.features { flex: 1; display: flex; flex-direction: column; gap: 4px; padding: 16px 12px 0; }
.feat { display: flex; align-items: center; flex: none; height: 38px; padding: 0 10px 0 12px; background: #f1f3f7; border-radius: 4px; }
.feat-ico { width: 20px; height: 20px; margin-right: 8px; color: #24384f; }
.feat-name { flex: 1; padding-bottom: 4px; font-size: 13px; font-weight: 500; color: #33445a; }
.slot { display: flex; align-items: center; justify-content: center; width: 32px; height: 24px; }
.logo-text { flex-direction: column; }
.envoy { font: 7px/7px Lato, sans-serif; color: #6c3a8f; }
.argo { font: 700 8px/8px Lato, sans-serif; color: #222; }
.dots { width: 24px; text-align: center; color: #666; font-size: 12px; letter-spacing: 1px; }

.sidebar {
  position: absolute;
  left: 0;
  top: 46px;
  bottom: 0;
  width: 208px;
  background: #2b2e37;
}
.nav-group { display: flex; align-items: center; height: 46px; padding: 0 0 4px 18px; color: #7d818a; }
.nav-item { display: flex; align-items: center; height: 46px; padding-left: 18px; color: #c2c5cd; }
.nav-item.active { background: #3a3d48; }
.nav-ico { width: 22px; height: 22px; margin-right: 10px; color: #b2b6c4; }
.nav-text { flex: 1; padding-bottom: 4px; font-size: 13px; }
.chev { width: 8px; height: 12px; margin-right: 14px; fill: none; stroke: #6d7179; stroke-width: 1.200; }

.flyout {
  position: absolute;
  left: 206px;
  top: 644px;
  width: 200px;
  padding: 10px 0;
  background: #2b2e37;
  border-radius: 0 6px 6px 0;
  box-shadow: 0 6px 30px rgba(30, 35, 50, .18);
}
.fly-item { display: flex; align-items: center; height: 36px; padding-left: 16px; color: #b9bcc4; font-size: 13px; white-space: nowrap; }
.fly-text { padding-bottom: 2px; letter-spacing: .1px; }
.fly-ico { width: 20px; height: 20px; margin-right: 12px; color: #b2b6c4; }
.callout { position: absolute; left: 215px; top: 936px; width: 182px; height: 51px; border: 2px solid #f03020; border-radius: 6px; }
```
